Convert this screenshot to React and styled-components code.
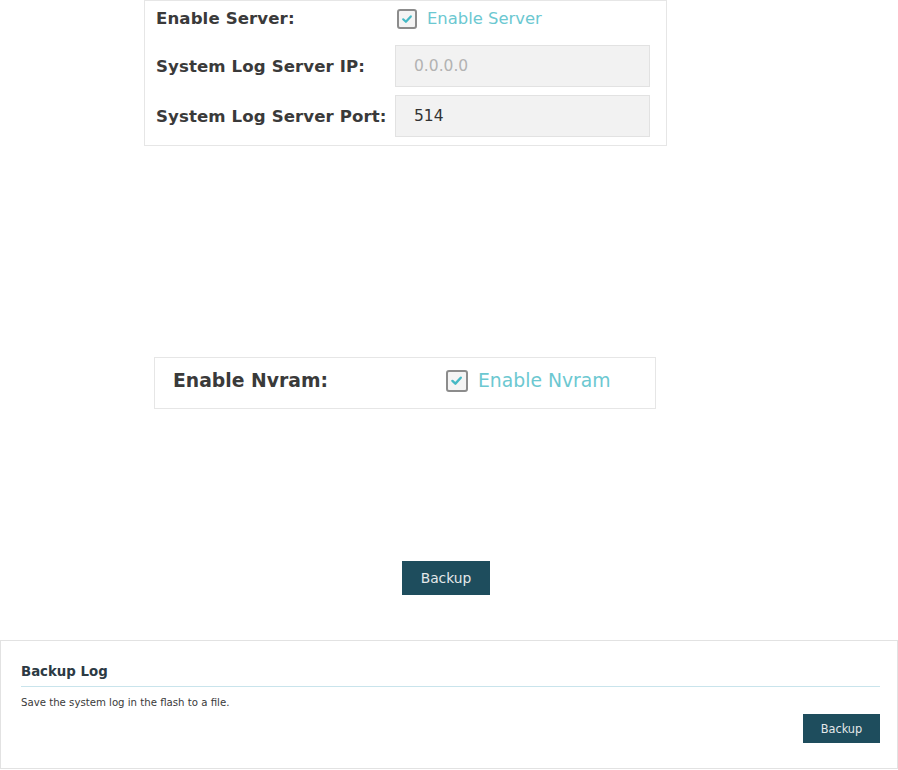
import styled, { createGlobalStyle } from 'styled-components';

const GlobalStyle = createGlobalStyle`
  html, body {
    margin: 0;
    padding: 0;
    background: #ffffff;
  }

  body {
    font-family: "DejaVu Sans", Verdana, sans-serif;
    color: #333333;
  }

  * {
    box-sizing: border-box;
  }
`;

function Checkbox({ size = 20, checked = true }) {
  return (
    <CheckBox $size={size}>
      {checked && (
        <svg width={size * 0.6} height={size * 0.6} viewBox="0 0 12 12">
          <path
            d="M2.2 6.3 L4.9 8.8 L9.8 3.4"
            fill="none"
            stroke="#45b9c5"
            strokeWidth="2.2"
            strokeLinecap="round"
            strokeLinejoin="round"
          />
        </svg>
      )}
    </CheckBox>
  );
}

export default function App() {
  return (
    <>
      <GlobalStyle />
      <Page>
        <ServerPanel>
          <FieldLabel $lift={2}>Enable Server:</FieldLabel>
          <CheckField $offset={2} $lift={2}>
            <Checkbox size={20} />
            <CheckText>Enable Server</CheckText>
          </CheckField>

          <FieldLabel>System Log Server IP:</FieldLabel>
          <TextBox $muted readOnly value="0.0.0.0" />

          <FieldLabel>System Log Server Port:</FieldLabel>
          <TextBox readOnly value="514" />
        </ServerPanel>

        <NvramPanel>
          <NvramLabel>Enable Nvram:</NvramLabel>
          <CheckField>
            <Checkbox size={22} />
            <CheckText $large>Enable Nvram</CheckText>
          </CheckField>
        </NvramPanel>

        <PrimaryButton>Backup</PrimaryButton>

        <BackupPanel>
          <SectionTitle>Backup Log</SectionTitle>
          <SectionText>Save the system log in the flash to a file.</SectionText>
          <ActionRow>
            <SmallButton>Backup</SmallButton>
          </ActionRow>
        </BackupPanel>
      </Page>
    </>
  );
}

const Page = styled.div`
  display: flex;
  flex-direction: column;
  align-items: flex-start;
  width: 898px;
  height: 770px;
`;

const ServerPanel = styled.section`
  display: grid;
  grid-template-columns: 239px 255px;
  grid-template-rows: 35px 42px 42px;
  row-gap: 8px;
  align-items: center;
  width: 523px;
  height: 146px;
  margin-left: 144px;
  padding: 1px 0 9px 11px;
  border: 1px solid #e6e6e6;
`;

const FieldLabel = styled.div`
  margin-bottom: ${(p) => p.$lift || 0}px;
  font-size: 16.6px;
  font-weight: bold;
  letter-spacing: 0.1px;
  color: #3a3a3a;
  white-space: nowrap;
`;

const CheckField = styled.label`
  display: flex;
  align-items: center;
  gap: 10px;
  margin-left: ${(p) => p.$offset || 0}px;
  margin-bottom: ${(p) => p.$lift || 0}px;
`;

const CheckBox = styled.span`
  display: inline-flex;
  align-items: center;
  justify-content: center;
  width: ${(p) => p.$size}px;
  height: ${(p) => p.$size}px;
  border: 2px solid #8c8c8c;
  border-radius: 3px;
  background: #f4f4f4;
`;

const CheckText = styled.span`
  font-size: ${(p) => (p.$large ? '18.8px' : '16.4px')};
  color: #6cc8d1;
  white-space: nowrap;
`;

const TextBox = styled.input`
  width: 255px;
  height: 42px;
  padding: 0 0 0 18px;
  border: 1px solid #e2e2e2;
  background: #f2f2f2;
  font-family: "DejaVu Sans", Verdana, sans-serif;
  font-size: 15.5px;
  color: ${(p) => (p.$muted ? '#b3b3b3' : '#333333')};
  outline: none;
`;

const NvramPanel = styled.section`
  display: grid;
  grid-template-columns: 273px auto;
  align-items: center;
  width: 502px;
  height: 52px;
  margin: 211px 0 0 154px;
  padding: 0 0 5px 18px;
  border: 1px solid #e6e6e6;
`;

const NvramLabel = styled.div`
  font-size: 18.8px;
  font-weight: bold;
  color: #3a3a3a;
  white-space: nowrap;
`;

const PrimaryButton = styled.button`
  width: 88px;
  height: 34px;
  margin: 152px 0 0 402px;
  padding: 0;
  border: none;
  background: #1e4d5d;
  color: #e4e8ea;
  font-family: "DejaVu Sans", Verdana, sans-serif;
  font-size: 13.8px;
  cursor: pointer;
`;

const BackupPanel = styled.section`
  display: flex;
  flex-direction: column;
  width: 898px;
  height: 129px;
  margin-top: 45px;
  padding: 21px 17px 0 20px;
  border: 1px solid #e2e2e2;
  font-family: "DejaVu Sans Condensed", "DejaVu Sans", sans-serif;
`;

const SectionTitle = styled.h3`
  margin: 0;
  padding-bottom: 6px;
  border-bottom: 1px solid #c9e4ec;
  font-size: 14.8px;
  line-height: 18px;
  font-weight: bold;
  color: #2c3a44;
`;

const SectionText = styled.p`
  margin: 9px 0 0;
  font-size: 11.3px;
  line-height: 14px;
  color: #3a3a3a;
`;

const ActionRow = styled.div`
  display: flex;
  justify-content: flex-end;
  margin-top: 4px;
`;

const SmallButton = styled.button`
  width: 77px;
  height: 29px;
  padding: 0;
  border: none;
  background: #1e4d5d;
  color: #e4e8ea;
  font-family: "DejaVu Sans Condensed", "DejaVu Sans", sans-serif;
  font-size: 12.6px;
  cursor: pointer;
`;
